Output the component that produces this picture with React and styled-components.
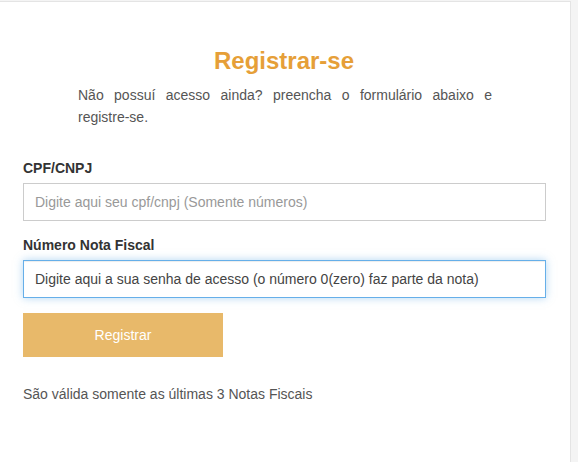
import React from "react";
import styled, { createGlobalStyle } from "styled-components";

const Global = createGlobalStyle`
  html, body {
    margin: 0;
    padding: 0;
    background: #f4f4f4;
    font-family: "Liberation Sans", Arial, sans-serif;
  }
`;

const Page = () => {
  const refNota = React.useRef(null);

  React.useEffect(() => {
    const el = refNota.current;
    if (el) {
      el.focus();
      el.setSelectionRange(el.value.length, el.value.length);
    }
  }, []);

  return (
    <>
      <Global />
      <Card>
        <Title>Registrar-se</Title>
        <Intro>
          Não possuí acesso ainda? preencha o formulário abaixo e
          registre-se.
        </Intro>
        <Label $first>CPF/CNPJ</Label>
        <Input placeholder="Digite aqui seu cpf/cnpj (Somente números)" />
        <Label>Número Nota Fiscal</Label>
        <Input
          ref={refNota}
          $focused
          defaultValue="Digite aqui a sua senha de acesso (o número 0(zero) faz parte da nota)"
        />
        <Btn>Registrar</Btn>
        <Note>São válida somente as últimas 3 Notas Fiscais</Note>
      </Card>
    </>
  );
};

export default Page;

const Card = styled.div`
  box-sizing: border-box;
  width: 571px;
  min-height: 461px;
  margin-top: 1px;
  padding: 45px 25px 40px 23px;
  background: #fff;
  border-top: 1px solid #e4e4e4;
  border-right: 1px solid #e4e4e4;
`;

const Title = styled.h2`
  margin: 0;
  font-size: 24px;
  line-height: 27px;
  font-weight: bold;
  color: #e69f38;
  text-align: center;
`;

const Intro = styled.p`
  width: 414px;
  margin: 10px auto 0 55px;
  font-size: 14px;
  line-height: 22px;
  color: #555;
  text-align: justify;
`;

const Label = styled.div`
  margin-top: ${(p) => (p.$first ? "30px" : "14px")};
  margin-bottom: 5px;
  font-size: 14px;
  line-height: 20px;
  font-weight: bold;
  color: #333;
`;

const Input = styled.input`
  display: block;
  box-sizing: border-box;
  width: 523px;
  height: 38px;
  padding: 0 11px;
  font-family: "Liberation Sans", Arial, sans-serif;
  font-size: 14px;
  color: #444;
  caret-color: #333;
  background: #fff;
  border: 1px solid ${(p) => (p.$focused ? "#66afe9" : "#ccc")};
  border-radius: 0;
  outline: none;
  box-shadow: ${(p) =>
    p.$focused
      ? "inset 0 1px 1px rgba(0,0,0,.075), 0 0 8px rgba(102,175,233,.5)"
      : "none"};
  &::placeholder {
    color: #999;
  }
`;

const Btn = styled.button`
  display: block;
  width: 200px;
  height: 44px;
  margin-top: 15px;
  border: none;
  border-radius: 0;
  background-color: #e8b96a;
  color: #fff;
  font-family: "Liberation Sans", Arial, sans-serif;
  font-size: 14px;
`;

const Note = styled.p`
  margin: 27px 0 0;
  font-size: 14px;
  line-height: 20px;
  color: #555;
`;
